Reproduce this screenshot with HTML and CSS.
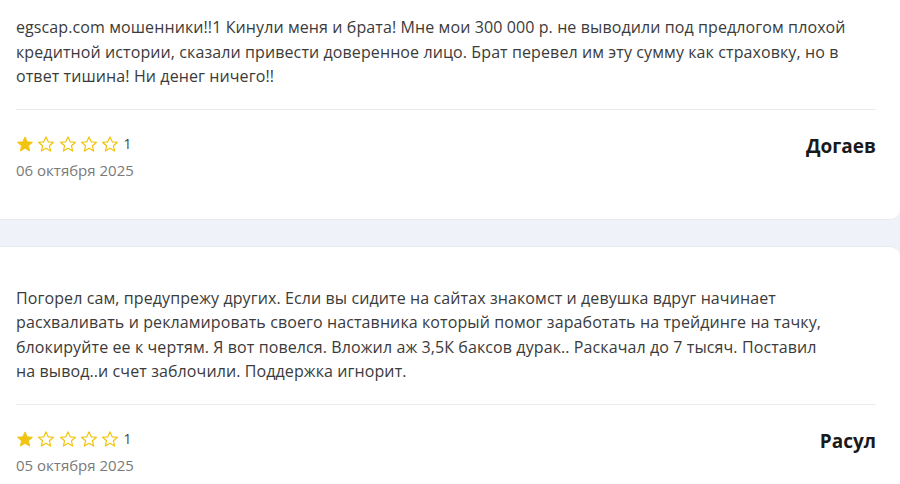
FILE: index.html
```html
<!DOCTYPE html>
<html lang="ru">
<head>
<meta charset="utf-8">
<link rel="stylesheet" href="styles.css">
</head>
<body>
<div class="list">
  <div class="card first">
    <p class="text">egscap.com мошенники!!1 Кинули меня и брата! Мне мои 300 000 р. не выводили под предлогом плохой кредитной истории, сказали привести доверенное лицо. Брат перевел им эту сумму как страховку, но в ответ тишина! Ни денег ничего!!</p>
    <div class="meta">
      <div class="left">
        <div class="rating">
          <svg class="star" viewBox="0 0 24 24"><path class="full" d="M12 2.5l2.9 6.6 7.1.6-5.4 4.7 1.6 7-6.2-3.7-6.2 3.7 1.6-7L2 9.7l7.1-.6z"/></svg>
          <svg class="star" viewBox="0 0 24 24"><path class="empty" d="M12 2.5l2.9 6.6 7.1.6-5.4 4.7 1.6 7-6.2-3.7-6.2 3.7 1.6-7L2 9.7l7.1-.6z"/></svg>
          <svg class="star" viewBox="0 0 24 24"><path class="empty" d="M12 2.5l2.9 6.6 7.1.6-5.4 4.7 1.6 7-6.2-3.7-6.2 3.7 1.6-7L2 9.7l7.1-.6z"/></svg>
          <svg class="star" viewBox="0 0 24 24"><path class="empty" d="M12 2.5l2.9 6.6 7.1.6-5.4 4.7 1.6 7-6.2-3.7-6.2 3.7 1.6-7L2 9.7l7.1-.6z"/></svg>
          <svg class="star" viewBox="0 0 24 24"><path class="empty" d="M12 2.5l2.9 6.6 7.1.6-5.4 4.7 1.6 7-6.2-3.7-6.2 3.7 1.6-7L2 9.7l7.1-.6z"/></svg>
          <span class="score">1</span>
        </div>
        <div class="date">06 октября 2025</div>
      </div>
      <div class="name">Догаев</div>
    </div>
  </div>
  <div class="card">
    <p class="text">Погорел сам, предупрежу других. Если вы сидите на сайтах знакомст и девушка вдруг начинает расхваливать и рекламировать своего наставника который помог заработать на трейдинге на тачку, блокируйте ее к чертям. Я вот повелся. Вложил аж 3,5К баксов дурак.. Раскачал до 7 тысяч. Поставил <span class="nw">на вывод..и</span> счет заблочили. Поддержка игнорит.</p>
    <div class="meta">
      <div class="left">
        <div class="rating">
          <svg class="star" viewBox="0 0 24 24"><path class="full" d="M12 2.5l2.9 6.6 7.1.6-5.4 4.7 1.6 7-6.2-3.7-6.2 3.7 1.6-7L2 9.7l7.1-.6z"/></svg>
          <svg class="star" viewBox="0 0 24 24"><path class="empty" d="M12 2.5l2.9 6.6 7.1.6-5.4 4.7 1.6 7-6.2-3.7-6.2 3.7 1.6-7L2 9.7l7.1-.6z"/></svg>
          <svg class="star" viewBox="0 0 24 24"><path class="empty" d="M12 2.5l2.9 6.6 7.1.6-5.4 4.7 1.6 7-6.2-3.7-6.2 3.7 1.6-7L2 9.7l7.1-.6z"/></svg>
          <svg class="star" viewBox="0 0 24 24"><path class="empty" d="M12 2.5l2.9 6.6 7.1.6-5.4 4.7 1.6 7-6.2-3.7-6.2 3.7 1.6-7L2 9.7l7.1-.6z"/></svg>
          <svg class="star" viewBox="0 0 24 24"><path class="empty" d="M12 2.5l2.9 6.6 7.1.6-5.4 4.7 1.6 7-6.2-3.7-6.2 3.7 1.6-7L2 9.7l7.1-.6z"/></svg>
          <span class="score">1</span>
        </div>
        <div class="date">05 октября 2025</div>
      </div>
      <div class="name">Расул</div>
    </div>
  </div>
</div>
</body>
</html>
```
FILE: styles.css
```css
html, body {
  margin: 0;
  padding: 0;
  background: #eff3f9;
  overflow: hidden;
}
body {
  width: 900px;
  height: 484px;
  font-family: "Open Sans", "Liberation Sans", sans-serif;
  color: #3a3a3a;
}
.list {
  display: flex;
  flex-direction: column;
  gap: 26px;
  margin-left: -12px;
  width: 912px;
}
.card {
  background: #fff;
  border-radius: 10px;
  border-bottom: 1px solid #e6e9ee;
  border-top: 1px solid #e6e9ee;
  padding: 39px 24px 40px 28px;
}
.card.first {
  margin-top: -25px;
  padding-bottom: 39px;
}
.text {
  margin: 0;
  font-size: 16px;
  letter-spacing: 0.1px;
  line-height: 24.5px;
  color: #3b3b3b;
  padding-bottom: 20px;
  border-bottom: 1px solid #ebebeb;
}
.nw {
  white-space: nowrap;
}
.meta {
  display: flex;
  justify-content: space-between;
  align-items: flex-start;
  padding-top: 24px;
}
.rating {
  display: flex;
  align-items: center;
  gap: 3.3px;
  height: 20px;
}
.star {
  width: 18px;
  height: 18px;
}
.full {
  fill: #f1c40f;
  stroke: #f1c40f;
  stroke-width: 1.2;
  stroke-linejoin: round;
}
.empty {
  fill: none;
  stroke: #f1c40f;
  stroke-width: 1.6;
  stroke-linejoin: round;
}
.score {
  font-size: 14px;
  color: #444;
  margin-left: 1px;
}
.date {
  margin-top: 6px;
  font-size: 15px;
  color: #7a7a7a;
}
.name {
  font-size: 19px;
  font-weight: 700;
  color: #1a1a1a;
  margin-top: -1px;
}
```
